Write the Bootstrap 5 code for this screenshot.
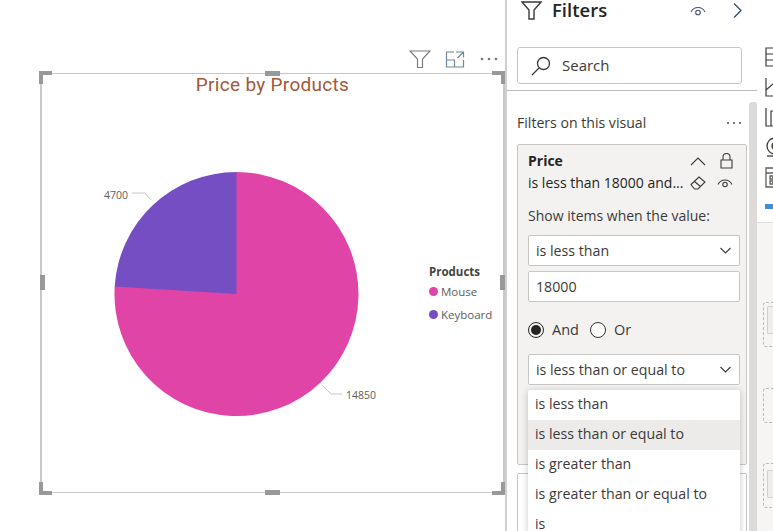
<!DOCTYPE html>
<html lang="en">
<head>
    <meta charset="UTF-8">
    <meta name="viewport" content="width=device-width, initial-scale=1.0">
    <title>Price by Products</title>
    <link rel="stylesheet" href="https://cdn.jsdelivr.net/npm/bootstrap@5.3.0/dist/css/bootstrap.min.css">
    <style>
        html, body { height: 531px; overflow: hidden; background: #fff; }
        body { font-family: "Open Sans", "Noto Sans", sans-serif; font-size: 14px; color: #252423; }
        .page { height: 531px; width: 773px; }

        /* report canvas */
        .canvas { width: 505px; flex: none; padding: 47px 0 0 40px; }
        .vis-tools { height: 26px; width: 465px; gap: 14px; padding: 0 6px 2px 0; }
        .vis-frame { position: relative; width: 465px; height: 420px; border: 1px solid #c8c8c8; border-left-width: 2px; border-right-width: 2px; }
        .grip { position: absolute; background: #999; }
        .grip-h { width: 15px; height: 5px; left: 223px; }
        .grip-v { width: 5px; height: 15px; }
        .corner { position: absolute; width: 13px; height: 13px; border: 4px solid #999; }
        .chart-title { font-family: "Roboto", "Liberation Sans", sans-serif; font-size: 19px; color: #a5573a; text-align: center; line-height: 22px; letter-spacing: .3px; }
        .pie-svg { position: absolute; left: 1px; top: 0; }
        .legend-box { position: absolute; left: 387px; top: 189px; font-size: 11.5px; color: #605e5c; }
        .legend-box strong { color: #444; font-weight: 700; font-size: 11.5px; }
        .legend-row { height: 23px; gap: 3px; }
        .legend-dot { width: 9px; height: 9px; border-radius: 50%; }
        .legend-mouse { background: #e044a7; }
        .legend-keyboard { background: #744ec2; }

        /* filters pane */
        .pane { width: 252px; flex: none; position: relative; border-left: 2px solid #d2d0ce; background: #fff; }
        .pane-head { height: 41px; margin-top: -10px; padding: 0 15px 0 14px; }
        .pane-head h1 { font-family: "Open Sans", sans-serif; font-size: 18.5px; font-weight: 600; margin: 0 0 0 10px; color: #252423; }
        .search-box { margin: 16px 15px 0 10px; height: 37px; border: 1px solid #c8c6c4; border-radius: 3px; padding-left: 13px; gap: 11px; font-size: 15px; color: #3b3a39; }
        .pane-rule { height: 1px; background: #bdbbb9; margin-top: 6px; }
        .pane-scroll { position: absolute; right: 0; top: 102px; bottom: 0; width: 8px; background: #dcdbd9; border-radius: 3px 3px 0 0; }
        .pane-label { margin: 22px 16px 0 10px; height: 20px; font-size: 14.1px; color: #3b3a39; line-height: 20px; }
        .filter-box { margin: 11px 0 0 10px; width: 230px; height: 321px; background: #f3f2f1; border: 1px solid #c8c6c4; border-radius: 2px; padding: 6px 6px 0 10px; }
        .filter-name { font-weight: 700; font-size: 14px; line-height: 20px; }
        .filter-sum { font-size: 14px; line-height: 20px; white-space: nowrap; }
        .filter-sumrow { margin-top: 2px; }
        .filter-icons { width: 43px; margin-right: 7px; }
        .filter-hint { font-size: 14px; margin-top: 13px; line-height: 20px; color: #3b3a39; }
        .pick { height: 31px; background: #fff; border: 1px solid #c8c6c4; border-radius: 2px; padding: 0 8px 0 7px; font-size: 14.2px; color: #3b3a39; margin-top: 9px; }
        .pick + .pick { margin-top: 5px; }
        .rad-row { height: 20px; margin-top: 18px; gap: 8px; font-size: 14.5px; color: #3b3a39; }
        .rad { width: 16px; height: 16px; border-radius: 50%; border: 1px solid #323130; background: #fff; flex: none; display: block; }
        .rad-on { border-color: #252423; padding: 2px; background: #252423 content-box; }
        .rad-gap { margin-left: 3px; }
        .rad-next { margin-top: 14px; }
        .filter-box2 { margin: 8px 0 0 10px; width: 230px; height: 70px; background: #fff; border: 1px solid #c8c6c4; border-radius: 2px; }
        .op-menu { position: absolute; left: 21px; top: 390px; width: 212px; height: 150px; background: #fff; border-radius: 2px; box-shadow: 0 1px 7px rgba(0,0,0,.22); font-size: 14.2px; color: #3b3a39; }
        .op-item { height: 30px; line-height: 28px; padding-left: 7px; }
        .op-item-on { background: #edebe9; }

        /* right side strip */
        .strip { flex: 1 1 auto; position: relative; background: #fff; }
        .strip-tools { padding: 47px 0 0 8px; gap: 10px; height: 223px; border-bottom: 1px solid #e1dfdd; }
        .strip-blue { margin-top: 6px; }
        .strip-low { height: 308px; background: #f6f5f4; padding: 79px 0 0 6px; }
        .drop-box { border: 1px dashed #bdbbb9; border-right: 0; border-radius: 3px 0 0 3px; padding-left: 3px; }
        .drop-one { height: 45px; padding-top: 3px; }
        .drop-two { height: 35px; margin-top: 41px; }
        .drop-three { height: 45px; margin-top: 40px; padding-top: 6px; }
        .drop-fill { background: #efeeed; border: 1px solid #d2d0ce; border-right: 0; border-radius: 2px 0 0 2px; height: 28px; }
    </style>
</head>
<body>
<div class="page d-flex">

    <!-- Report canvas -->
    <div class="canvas">
        <div class="vis-tools d-flex justify-content-end align-items-center">
            <svg width="22" height="18" viewBox="0 0 22 18" fill="none" stroke="#7d7c7a" stroke-width="1.2"><path d="M1 1h20l-7.500 8v8.500h-5V9z"/></svg>
            <svg width="20" height="17" viewBox="0 0 20 17" fill="none" stroke="#6f8796" stroke-width="1.2"><path d="M9 1H1.500v15h17V9M11 1h7.500v5.500M18.500 1l-6 6M1.500 9h8v7"/></svg>
            <svg width="20" height="17" viewBox="0 0 20 17" fill="#77767a"><circle cx="3" cy="8" r="1.300"/><circle cx="10" cy="8" r="1.300"/><circle cx="17" cy="8" r="1.300"/></svg>
        </div>
        <div class="vis-frame">
            <div class="chart-title">Price by Products</div>
            <svg class="pie-svg" width="460" height="418" viewBox="0 0 460 418">
                <path d="M193.500 98A122 122 0 1 1 71.700 212.500z" fill="#e044a7"/>
                <path d="M193.500 98A122 122 0 0 0 71.700 212.500L193.500 220z" fill="#744ec2"/>
                <g fill="none" stroke="#c8c8c8" stroke-width="1"><path d="M89 119h13l6 7"/><path d="M279 311l9 9h11"/></g>
                <text x="61" y="125" font-family="Open Sans, sans-serif" font-size="10.500" fill="#605e5c">4700</text>
                <text x="303" y="325" font-family="Open Sans, sans-serif" font-size="10.500" fill="#605e5c">14850</text>
            </svg>
            <div class="legend-box">
                <strong class="d-block">Products</strong>
                <div class="legend-row d-flex align-items-center"><span class="legend-dot legend-mouse d-block"></span>Mouse</div>
                <div class="legend-row d-flex align-items-center"><span class="legend-dot legend-keyboard d-block"></span>Keyboard</div>
            </div>
            <span class="corner" style="left:-3px;top:-3px;border-right:0;border-bottom:0"></span>
            <span class="corner" style="right:-2px;top:-3px;border-left:0;border-bottom:0"></span>
            <span class="corner" style="left:-3px;bottom:-3px;border-right:0;border-top:0"></span>
            <span class="corner" style="right:-2px;bottom:-3px;border-left:0;border-top:0"></span>
            <span class="grip grip-h" style="top:-3px"></span>
            <span class="grip grip-h" style="bottom:-3px"></span>
            <span class="grip grip-v" style="left:-2px;top:201px"></span>
            <span class="grip grip-v" style="right:-2px;top:201px"></span>
        </div>
    </div>

    <!-- Filters pane -->
    <div class="pane">
        <div class="pane-head d-flex align-items-center">
            <svg width="21" height="19" viewBox="0 0 21 19" fill="none" stroke="#3b3a39" stroke-width="1.400"><path d="M1 1h19l-7 8v9H8V9z"/></svg>
            <h1>Filters</h1>
            <svg class="ms-auto" width="16" height="10" viewBox="0 0 16 10" fill="none" stroke="#44546a" stroke-width="1.100"><path d="M1 6c3-6 11-6 14 0"/><circle cx="8" cy="6.500" r="2.300"/></svg>
            <svg width="9" height="15" viewBox="0 0 9 15" fill="none" stroke="#2f4a70" stroke-width="1.300" style="margin-left:27px"><path d="M1 .500l7 7-7 7"/></svg>
        </div>
        <div class="search-box d-flex align-items-center">
            <svg width="20" height="20" viewBox="0 0 20 20" fill="none" stroke="#3b3a39" stroke-width="1.300"><circle cx="12.500" cy="7.500" r="6"/><path d="M8 12l-7 7"/></svg>
            <span>Search</span>
        </div>
        <div class="pane-rule"></div>
        <div class="pane-label d-flex justify-content-between align-items-center">
            <span>Filters on this visual</span>
            <svg width="14" height="4" viewBox="0 0 14 4" fill="#3b3a39"><circle cx="1" cy="2" r=".9"/><circle cx="7" cy="2" r=".9"/><circle cx="13" cy="2" r=".9"/></svg>
        </div>
        <div class="filter-box">
            <div class="d-flex justify-content-between align-items-center">
                <span class="filter-name">Price</span>
                <div class="filter-icons d-flex justify-content-between align-items-center">
                    <svg width="16" height="10" viewBox="0 0 16 10" fill="none" stroke="#3b3a39" stroke-width="1.100"><path d="M1 9l7-7 7 7"/></svg>
                    <svg width="13" height="16" viewBox="0 0 13 16" fill="none" stroke="#3b3a39" stroke-width="1.100"><path d="M3 7V4a3.500 3.500 0 0 1 7 0v3"/><path d="M1 7h11v8H1z"/></svg>
                </div>
            </div>
            <div class="filter-sumrow d-flex justify-content-between align-items-center">
                <span class="filter-sum">is less than 18000 and...</span>
                <div class="filter-icons d-flex justify-content-between align-items-center">
                    <svg width="16" height="14" viewBox="0 0 16 14" fill="none" stroke="#3b3a39" stroke-width="1.100"><path d="M1 8.500L9 1l6 5-7 7H4.500zM4.500 5.500l6 5"/></svg>
                    <svg width="16" height="11" viewBox="0 0 16 11" fill="none" stroke="#3b3a39" stroke-width="1.100"><path d="M1 6.500c3-6 11-6 14 0"/><circle cx="8" cy="6.500" r="2.200"/></svg>
                </div>
            </div>
            <div class="filter-hint">Show items when the value:</div>
            <div class="pick d-flex justify-content-between align-items-center">
                <span>is less than</span>
                <svg width="11" height="7" viewBox="0 0 11 7" fill="none" stroke="#3b3a39" stroke-width="1.100"><path d="M.5 1l5 5 5-5"/></svg>
            </div>
            <div class="pick d-flex align-items-center">18000</div>
            <div class="rad-row d-flex align-items-center">
                <span class="rad rad-on"></span><span>And</span>
                <span class="rad rad-gap"></span><span>Or</span>
            </div>
            <div class="pick rad-next d-flex justify-content-between align-items-center">
                <span>is less than or equal to</span>
                <svg width="11" height="7" viewBox="0 0 11 7" fill="none" stroke="#3b3a39" stroke-width="1.100"><path d="M.5 1l5 5 5-5"/></svg>
            </div>
        </div>
        <div class="filter-box2"></div>
        <div class="pane-scroll"></div>
        <div class="op-menu">
            <div class="op-item">is less than</div>
            <div class="op-item op-item-on">is less than or equal to</div>
            <div class="op-item">is greater than</div>
            <div class="op-item">is greater than or equal to</div>
            <div class="op-item">is</div>
        </div>
    </div>

    <!-- Right strip -->
    <div class="strip">
        <div class="strip-tools d-flex flex-column align-items-start">
            <svg width="16" height="20" viewBox="0 0 16 20" fill="none" stroke="#3b3a39" stroke-width="1.200"><path d="M1 1h15v18H1zM1 7h15M1 13h15"/></svg>
            <svg width="16" height="20" viewBox="0 0 16 20" fill="none" stroke="#3b3a39" stroke-width="1.200"><path d="M1 1v18h15M1 13l14-12"/></svg>
            <svg width="16" height="20" viewBox="0 0 16 20" fill="none" stroke="#3b3a39" stroke-width="1.200"><path d="M1 1v18h15M6 19V4h5v15"/></svg>
            <svg width="16" height="20" viewBox="0 0 16 20" fill="none" stroke="#3b3a39" stroke-width="1.300"><circle cx="10" cy="9" r="8"/><circle cx="11" cy="9" r="4" fill="#4c8a5c"/><path d="M2 19h14"/></svg>
            <svg width="16" height="21" viewBox="0 0 16 21" fill="none" stroke="#605e5c" stroke-width="1.300"><path d="M1 1h15v19H1zM1 6h15M5 9h3v3H5zM11 9h3v3h-3zM5 14h3v3H5z"/></svg>
            <svg class="strip-blue" width="16" height="5" viewBox="0 0 16 5"><rect width="8" height="5" fill="#3f8fd6"/></svg>
        </div>
        <div class="strip-low d-flex flex-column">
            <div class="drop-box drop-one"><div class="drop-fill"></div></div>
            <div class="drop-box drop-two"></div>
            <div class="drop-box drop-three"><div class="drop-fill"></div></div>
        </div>
    </div>
</div>
<script src="https://cdn.jsdelivr.net/npm/bootstrap@5.3.0/dist/js/bootstrap.bundle.min.js"></script>
</body>
</html>
